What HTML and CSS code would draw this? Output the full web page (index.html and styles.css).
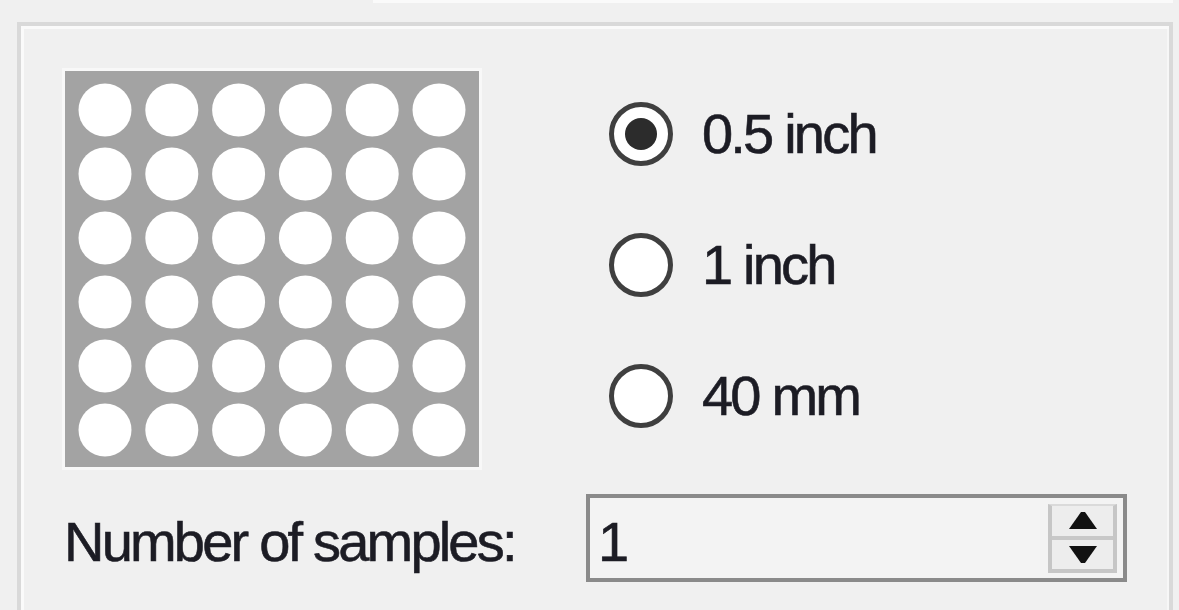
FILE: index.html
```html
<!DOCTYPE html>
<html lang="en">
<head>
	<meta charset="UTF-8">
	<title>Sample grid</title>
	<link rel="stylesheet" href="styles.css">
</head>
<body>
	<div class="topstrip"></div>
	<div class="group">
		<div class="upper">
			<svg class="grid" width="420" height="402" viewBox="0 0 420 402">
				<rect x="0" y="0" width="420" height="402" fill="#f8f8f8"/>
				<rect x="3" y="3" width="414" height="396" fill="#a3a3a3"/>
				<g fill="#ffffff" id="dots"></g>
			</svg>
			<ul class="radios">
				<li><span class="radio checked"></span><span class="lbl">0.5 inch</span></li>
				<li><span class="radio"></span><span class="lbl">1 inch</span></li>
				<li><span class="radio"></span><span class="lbl">40 mm</span></li>
			</ul>
		</div>
		<div class="lower">
			<label class="samples">Number of samples:</label>
			<div class="spinbox">
				<span class="value">1</span>
				<div class="spin">
					<div class="btn up">
						<svg width="28" height="17" viewBox="0 0 28 17"><polygon points="12,0 16,0 28,17 0,17" fill="#111"/></svg>
					</div>
					<div class="btn down">
						<svg width="28" height="17" viewBox="0 0 28 17"><polygon points="0,0 28,0 16,17 12,17" fill="#111"/></svg>
					</div>
				</div>
			</div>
		</div>
	</div>
	<script>
		var oDots = document.getElementById('dots');
		var html = '';
		for(var j=0;j<6;j++){
			for(var i=0;i<6;i++){
				html += '<circle cx="'+(43+i*66.8)+'" cy="'+(42+j*64)+'" r="26.5"/>';
			}
		}
		oDots.innerHTML = html;
	</script>
</body>
</html>
```

FILE: styles.css
```css
*{
	margin: 0;
	padding: 0;
	box-sizing: border-box;
}
ul{
	list-style: none;
}
body{
	background: #f0f0f0;
	font-family: "Liberation Sans", Arial, sans-serif;
	font-size: 56px;
	letter-spacing: -2.8px;
	color: #1c1c24;
	-webkit-text-stroke: 0.6px #1c1c24;
	overflow: hidden;
}
.topstrip{
	margin-left: 373px;
	width: 800px;
	height: 3px;
	background: #fafafa;
}
.group{
	margin-top: 19px;
	margin-left: 17px;
	width: 1156px;
	height: 588px;
	border: 4px solid #d9d9d9;
	border-bottom: none;
	box-shadow: inset 3px 3px 0 #fafafa, inset -2px 0 0 #f7f7f7;
	padding: 42px 0 0 41px;
}
.upper{
	display: flex;
	align-items: flex-start;
}
.grid{
	display: block;
}
.radios{
	margin-left: 127px;
}
.radios li{
	height: 131px;
	display: flex;
	align-items: center;
}
.radio{
	width: 64px;
	height: 64px;
	border: 5px solid #3f3f3f;
	border-radius: 50%;
	background: #fff;
	display: flex;
	align-items: center;
	justify-content: center;
}
.radio.checked::after{
	content: "";
	width: 32px;
	height: 32px;
	border-radius: 50%;
	background: #2c2c2c;
}
.lbl{
	margin-left: 29px;
	line-height: 1;
}
.lower{
	margin-top: 24px;
	display: flex;
	align-items: center;
}
.samples{
	width: 524px;
	line-height: 1;
	padding-top: 8px;
	padding-left: 2px;
}
.spinbox{
	width: 541px;
	height: 88px;
	border: 4px solid #8a8a8a;
	background: #f3f3f3;
	display: flex;
	align-items: center;
	justify-content: space-between;
	padding: 0 6px 0 8px;
}
.value{
	line-height: 1;
	padding-top: 8px;
}
.spin{
	width: 69px;
	height: 69px;
	margin-top: 1px;
	border: 4px solid #c6c6c6;
	border-top: 2px solid #dadada;
	display: flex;
	flex-direction: column;
}
.btn{
	flex: 1;
	background: #ededed;
	display: flex;
	align-items: center;
	justify-content: center;
}
.btn svg{
	display: block;
}
.up{
	border-bottom: 4px solid #c8c8c8;
}
```
